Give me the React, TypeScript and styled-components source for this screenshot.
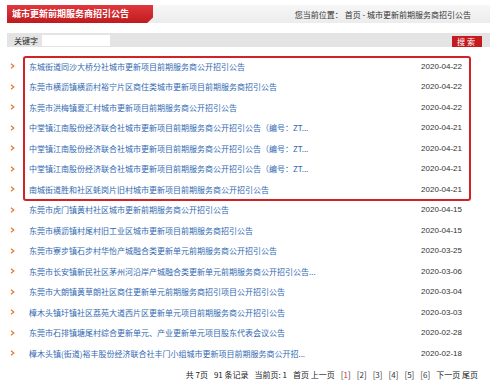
import React from "react";
import styled, { createGlobalStyle } from "styled-components";

const GlobalStyle = createGlobalStyle`
  html, body {
    margin: 0;
    padding: 0;
    background: #fff;
  }
  body {
    font-family: "Noto Sans CJK SC", "Liberation Sans", sans-serif;
    font-size: 8px;
    color: #333;
  }
`;

const Page = styled.div`
  width: 483px;
  padding: 5px 10px 0 7px;
`;

const Header = styled.div`
  display: flex;
  align-items: center;
  justify-content: space-between;
  height: 18px;
  background: linear-gradient(#f7f7f7, #ececec);
`;

const HeaderTitle = styled.h1`
  margin: 0;
  display: flex;
  align-items: center;
  width: 141px;
  height: 18px;
  padding-left: 5px;
  background: linear-gradient(#e0383c, #c01a1f);
  color: #fff;
  font-size: 9px;
  font-weight: bold;
  line-height: 18px;
  clip-path: polygon(0 0, 100% 0, 100% 70%, 96% 100%, 0 100%);
`;

const Crumb = styled.div`
  padding-right: 19px;
  font-size: 8px;
  color: #333;
  white-space: nowrap;
`;

const SearchBar = styled.form`
  display: flex;
  align-items: center;
  height: 14px;
  margin-top: 10px;
  padding: 0 8px 0 7px;
  background: #e4e4e4;
`;

const SearchLabel = styled.label`
  font-size: 8px;
  color: #222;
  white-space: nowrap;
`;

const SearchInput = styled.input`
  width: 68px;
  height: 11px;
  margin-left: 4px;
  padding: 0;
  border: none;
  background: #fff;
  outline: none;
`;

const SearchButton = styled.button`
  margin-left: auto;
  align-self: flex-end;
  width: 30px;
  height: 11px;
  padding: 0;
  border: none;
  background: #c41a20;
  color: #fff;
  font-family: inherit;
  font-size: 8px;
  line-height: 11px;
  letter-spacing: 2px;
`;

const List = styled.ul`
  list-style: none;
  margin: 9px 0 0;
  padding: 0;
`;

const Highlight = styled.div`
  position: relative;

  &::after {
    content: "";
    position: absolute;
    left: 16px;
    right: 19px;
    top: 0;
    bottom: -1px;
    border: 2px solid #d42027;
    border-radius: 3px;
    pointer-events: none;
  }
`;

const Row = styled.li`
  display: flex;
  align-items: center;
  height: 20.5px;
  padding: 0 28px 0 3px;
`;

const Arrow = styled.svg`
  flex: none;
  width: 5px;
  height: 6px;
  margin-right: 14px;
`;

const Title = styled.a`
  flex: 1;
  color: #3169b2;
  font-size: 8px;
  text-decoration: none;
  white-space: nowrap;
`;

const Date = styled.span`
  flex: none;
  font-family: "Liberation Sans", sans-serif;
  font-size: 8px;
  color: #333;
`;

const Pager = styled.div`
  display: flex;
  justify-content: flex-end;
  gap: 6px;
  height: 20px;
  line-height: 20px;
  margin-top: 1px;
  padding-right: 12px;
  font-size: 8px;
  color: #222;
  white-space: nowrap;
`;

const PageNum = styled.span<{ $current?: boolean }>`
  color: #333;
  & b {
    font-weight: normal;
    color: ${(p) => (p.$current ? "#e0282e" : "#333")};
  }
`;

const items: [string, string][] = [
  ["东城街道同沙大桥分社城市更新项目前期服务商公开招引公告", "2020-04-22"],
  ["东莞市横沥镇横沥村裕宁片区商住类城市更新项目前期服务商招引公告", "2020-04-22"],
  ["东莞市洪梅镇夏汇村城市更新项目前期服务商公开招引公告", "2020-04-22"],
  ["中堂镇江南股份经济联合社城市更新项目前期服务商公开招引公告（编号：ZT...", "2020-04-21"],
  ["中堂镇江南股份经济联合社城市更新项目前期服务商公开招引公告（编号：ZT...", "2020-04-21"],
  ["中堂镇江南股份经济联合社城市更新项目前期服务商公开招引公告（编号：ZT...", "2020-04-21"],
  ["南城街道胜和社区蚝岗片旧村城市更新项目前期服务商公开招引公告", "2020-04-21"],
  ["东莞市虎门镇黄村社区城市更新前期服务商公开招引公告", "2020-04-15"],
  ["东莞市横沥镇村尾村旧工业区城市更新项目前期服务商招引公告", "2020-04-15"],
  ["东莞市寮步镇石步村华怡产城融合类更新单元前期服务商公开招引公告", "2020-03-25"],
  ["东莞市长安镇新民社区茅州河沿岸产城融合类更新单元前期服务商公开招引公告...", "2020-03-06"],
  ["东莞市大朗镇黄草朗社区商住更新单元前期服务商招引项目公开招引公告", "2020-03-04"],
  ["樟木头镇圩镇社区荔苑大道西片区更新单元项目前期服务商公开招引公告", "2020-03-03"],
  ["东莞市石排镇塘尾村综合更新单元、产业更新单元项目股东代表会议公告", "2020-02-28"],
  ["樟木头镇(街道)裕丰股份经济联合社丰门小组城市更新项目前期服务商公开招...", "2020-02-18"],
];

const Item = ({ title, date }: { title: string; date: string }) => (
  <Row>
    <Arrow viewBox="0 0 5 6">
      <path d="M1 0.8 L3.8 3 L1 5.2" fill="none" stroke="#e5782e" strokeWidth="1.2" />
    </Arrow>
    <Title href="#">{title}</Title>
    <Date>{date}</Date>
  </Row>
);

export default function App() {
  return (
    <>
      <GlobalStyle />
      <Page>
        <Header>
          <HeaderTitle>城市更新前期服务商招引公告</HeaderTitle>
          <Crumb>您当前位置： 首页 - 城市更新前期服务商招引公告</Crumb>
        </Header>
        <SearchBar onSubmit={(e) => e.preventDefault()}>
          <SearchLabel>关键字</SearchLabel>
          <SearchInput type="text" />
          <SearchButton type="submit">搜索</SearchButton>
        </SearchBar>
        <List>
          <Highlight>
            {items.slice(0, 7).map(([t, d], i) => (
              <Item key={i} title={t} date={d} />
            ))}
          </Highlight>
          {items.slice(7).map(([t, d], i) => (
            <Item key={i + 7} title={t} date={d} />
          ))}
        </List>
        <Pager>
          <span>共 7页</span>
          <span>91 条记录</span>
          <span>当前页: 1</span>
          <span>首页 上一页</span>
          {[1, 2, 3, 4, 5, 6].map((n) => (
            <PageNum key={n} $current={n === 1}>
              [<b>{n}</b>]
            </PageNum>
          ))}
          <span>下一页 尾页</span>
        </Pager>
      </Page>
    </>
  );
}
